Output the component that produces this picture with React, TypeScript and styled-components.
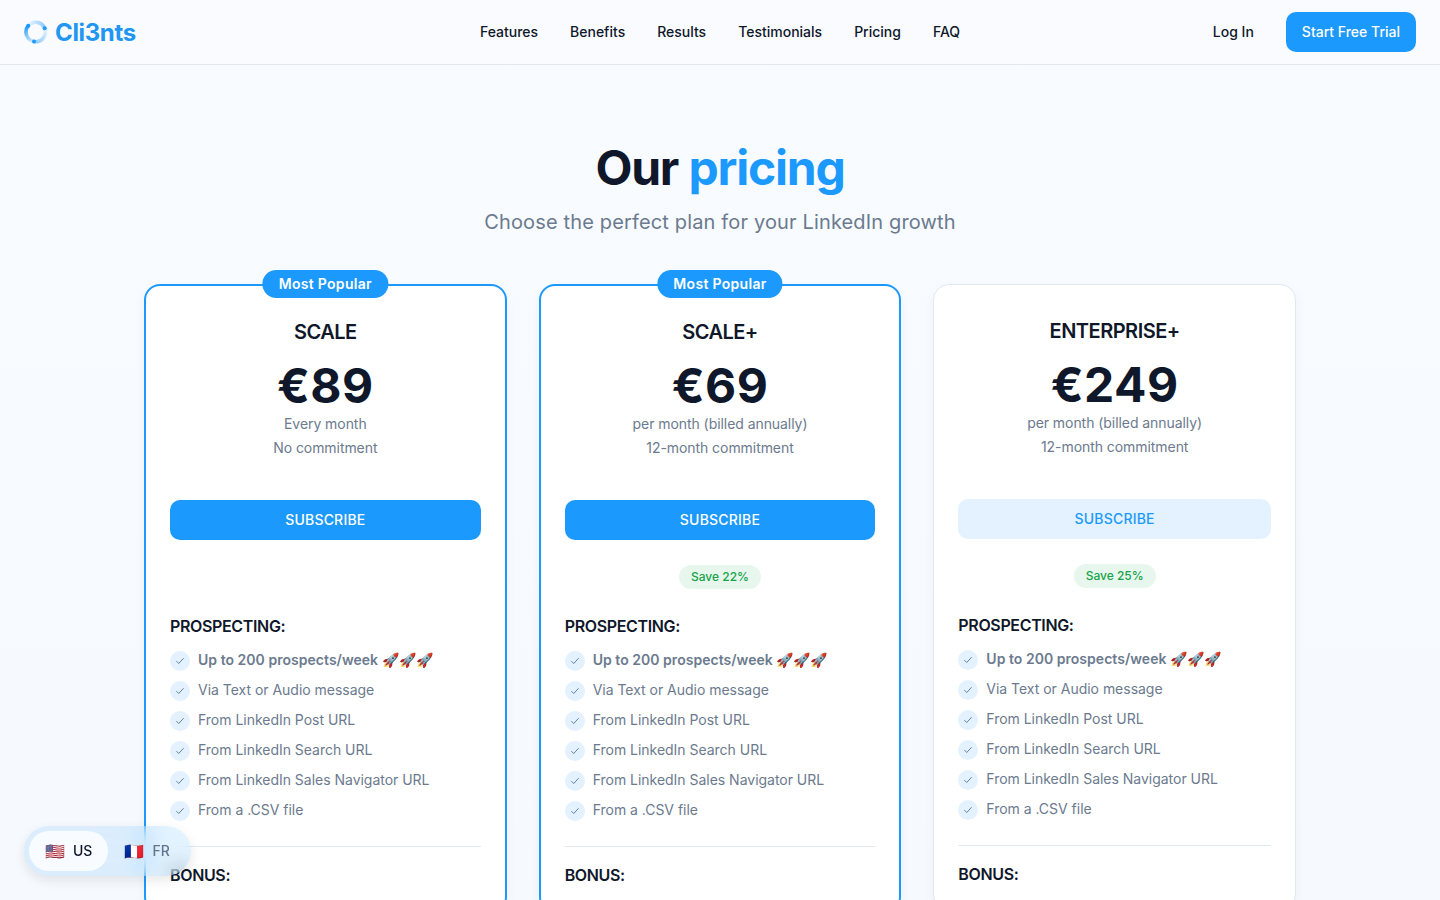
import React from "react";
import styled, { createGlobalStyle } from "styled-components";

const Global = createGlobalStyle`
  * { box-sizing: border-box; }
  html, body { margin: 0; padding: 0; }
  body {
    font-family: Inter, "Noto Sans", sans-serif;
    background: #f8fafd;
    color: #0f172a;
  }
`;

const Page = styled.div`
  min-height: 100vh;
  background: linear-gradient(180deg, #f8fbff 0%, #f6f9fd 100%);
`;
const Nav = styled.header`
  height: 65px;
  display: grid;
  grid-template-columns: 1fr auto 1fr;
  align-items: center;
  padding: 0 24px;
  border-bottom: 1px solid #e2e8f0;
  background: #f9fbfe;
`;
const Brand = styled.div`
  display: flex;
  align-items: center;
  gap: 7px;
  font-size: 24px;
  font-weight: 700;
  letter-spacing: -0.35px;
  color: #2196f3;
`;
const Links = styled.nav`
  display: flex;
  gap: 32px;
`;
const NavLink = styled.a`
  font-size: 14px;
  font-weight: 500;
  line-height: 20px;
  color: #0f172a;
`;
const NavRight = styled.div`
  display: flex;
  justify-content: flex-end;
  align-items: center;
  gap: 32px;
`;
const Trial = styled.button`
  height: 40px;
  padding: 0 16px 2px;
  border: 0;
  border-radius: 10px;
  background: #1c99fd;
  color: #fff;
  font: 500 14px Inter, sans-serif;
`;
const Section = styled.main`
  width: 1152px;
  margin: 0 auto;
  padding-top: 75px;
`;
const Title = styled.h1`
  margin: 0;
  text-align: center;
  font-size: 48px;
  line-height: 56px;
  font-weight: 700;
  letter-spacing: -1.2px;
  color: #0f172a;
`;
const Accent = styled.span`
  color: #1c99fd;
`;
const Sub = styled.p`
  margin: 12px 0 0;
  text-align: center;
  font-size: 20px;
  line-height: 28px;
  letter-spacing: 0.15px;
  color: #6b7a8e;
`;
const Grid = styled.div`
  margin-top: 48px;
  display: grid;
  grid-template-columns: repeat(3, 1fr);
  gap: 32px;
  align-items: start;
`;
const Card = styled.article<{ $featured?: boolean }>`
  position: relative;
  background: #fff;
  border-radius: 16px;
  padding: 24px;
  border: ${(p) => (p.$featured ? "2px solid #1c99fd" : "1px solid #e2e8f0")};
  box-shadow: 0 4px 12px rgba(15, 23, 42, 0.04);
`;
const Popular = styled.div`
  position: absolute;
  top: -16px;
  left: 50%;
  transform: translateX(-50%);
  height: 28px;
  padding: 0 16px;
  border-radius: 14px;
  background: #1c99fd;
  color: #fff;
  font-size: 14px;
  font-weight: 600;
  line-height: 28px;
  letter-spacing: 0.3px;
  white-space: nowrap;
`;
const Head = styled.div`
  text-align: center;
`;
const PlanName = styled.h3`
  margin: 8px 0 0;
  font-size: 20px;
  line-height: 28px;
  font-weight: 600;
  letter-spacing: -0.5px;
  color: #0f172a;
`;
const Price = styled.div`
  margin-top: 13px;
  font-size: 48px;
  line-height: 53px;
  font-weight: 700;
  letter-spacing: 0.5px;
  color: #0f172a;
`;
const Terms = styled.div`
  font-size: 14px;
  line-height: 24px;
  letter-spacing: -0.06px;
  color: #6b7a8e;
  min-height: 48px;
`;
const Subscribe = styled.button<{ $muted?: boolean }>`
  display: block;
  width: 100%;
  height: 40px;
  margin-top: 40px;
  padding: 0 0 2px;
  border: 0;
  border-radius: 10px;
  background: ${(p) => (p.$muted ? "#e3f2fe" : "#1c99fd")};
  color: ${(p) => (p.$muted ? "#1c99fd" : "#fff")};
  font: 500 14px Inter, sans-serif;
  letter-spacing: 0.2px;
`;
const SaveRow = styled.div`
  height: 24px;
  margin-top: 25px;
  display: flex;
  justify-content: center;
`;
const Save = styled.span`
  height: 24px;
  padding: 0 12px;
  border-radius: 12px;
  background: #e8f7ed;
  color: #16a34a;
  font-size: 12px;
  font-weight: 500;
  line-height: 24px;
`;
const Group = styled.h4<{ $tight?: boolean }>`
  margin: ${(p) => (p.$tight ? "16px" : "25px")} 0 0;
  font-size: 16px;
  line-height: 24px;
  font-weight: 600;
  letter-spacing: -0.35px;
  color: #0f172a;
`;
const List = styled.ul`
  list-style: none;
  margin: 12px 0 0;
  padding: 0;
  display: flex;
  flex-direction: column;
  gap: 10px;
`;
const Item = styled.li`
  display: flex;
  align-items: flex-start;
  gap: 8px;
  font-size: 14px;
  line-height: 20px;
  letter-spacing: -0.02px;
  color: #6b7a8e;
`;
const Check = styled.span`
  width: 20px;
  height: 20px;
  margin: 1px 0 -1px;
  flex: none;
  display: flex;
  align-items: center;
  justify-content: center;
  border-radius: 50%;
  background: #e3f2fe;
  color: #4b6b8a;
`;
const Strong = styled.span`
  font-weight: 600;
  letter-spacing: 0.03px;
`;
const Divider = styled.hr`
  margin: 26px 0 0;
  border: 0;
  border-top: 1px solid #e2e8f0;
`;
const Lang = styled.div`
  position: fixed;
  left: 24px;
  bottom: 24px;
  height: 50px;
  padding: 5px;
  display: flex;
  border-radius: 25px;
  background: rgba(28, 153, 253, 0.12);
  backdrop-filter: blur(10px);
  box-shadow: 0 4px 12px rgba(15, 23, 42, 0.1);
`;
const LangOption = styled.div<{ $active?: boolean }>`
  height: 40px;
  padding: 0 16px 1px;
  display: flex;
  align-items: center;
  gap: 8px;
  border-radius: 20px;
  background: ${(p) => (p.$active ? "#f8fbff" : "transparent")};
  color: ${(p) => (p.$active ? "#0f172a" : "#64748b")};
  font-size: 14px;
  font-weight: 500;
`;
const Flag = styled.span`
  font-size: 16px;
  line-height: 20px;
`;

const Logo = () => (
  <svg width="24" height="24" viewBox="0 0 24 24" fill="none">
    <defs>
      <linearGradient id="arcA" gradientUnits="userSpaceOnUse" x1="10" y1="21.5" x2="4.3" y2="5.7">
        <stop offset="0" stopColor="#cfe7fd" />
        <stop offset="0.6" stopColor="#6fbdfb" />
        <stop offset="1" stopColor="#1c99fd" />
      </linearGradient>
      <linearGradient id="arcB" gradientUnits="userSpaceOnUse" x1="4.3" y1="5.7" x2="20.7" y2="8.3">
        <stop offset="0" stopColor="#e6f3fe" />
        <stop offset="1" stopColor="#8ecbfc" />
      </linearGradient>
      <linearGradient id="arcC" gradientUnits="userSpaceOnUse" x1="20.7" y1="8.3" x2="10" y2="21.5">
        <stop offset="0" stopColor="#e6f3fe" />
        <stop offset="1" stopColor="#8ecbfc" />
      </linearGradient>
    </defs>
    <g strokeWidth="3.6">
      <path d="M10 21.5A9.7 9.7 0 0 1 4.3 5.7" stroke="url(#arcA)" />
      <path d="M4.3 5.7A9.7 9.7 0 0 1 20.7 8.3" stroke="url(#arcB)" />
      <path d="M20.7 8.3A9.7 9.7 0 0 1 10 21.5" stroke="url(#arcC)" />
    </g>
    <circle cx="4.3" cy="5.7" r="2" fill="#1c99fd" />
    <circle cx="20.7" cy="8.3" r="2" fill="#1c99fd" />
    <circle cx="10" cy="21.4" r="2" fill="#1c99fd" />
  </svg>
);

const Tick = () => (
  <svg width="10" height="10" viewBox="0 0 24 24" fill="none" stroke="currentColor" strokeWidth="2" strokeLinecap="round" strokeLinejoin="round">
    <path d="M4 13l5 5L20 6" />
  </svg>
);

const features = [
  "Via Text or Audio message",
  "From LinkedIn Post URL",
  "From LinkedIn Search URL",
  "From LinkedIn Sales Navigator URL",
  "From a .CSV file",
];

const plans = [
  { name: "SCALE", price: "€89", lines: ["Every month", "No commitment"], featured: true },
  { name: "SCALE+", price: "€69", lines: ["per month (billed annually)", "12-month commitment"], featured: true, save: "Save 22%" },
  { name: "ENTERPRISE+", price: "€249", lines: ["per month (billed annually)", "12-month commitment"], save: "Save 25%" },
];

export default function App() {
  return (
    <Page>
      <Global />
      <Nav>
        <Brand>
          <Logo />
          Cli3nts
        </Brand>
        <Links>
          {["Features", "Benefits", "Results", "Testimonials", "Pricing", "FAQ"].map((l) => (
            <NavLink key={l}>{l}</NavLink>
          ))}
        </Links>
        <NavRight>
          <NavLink>Log In</NavLink>
          <Trial>Start Free Trial</Trial>
        </NavRight>
      </Nav>
      <Section>
        <Title>
          Our <Accent>pricing</Accent>
        </Title>
        <Sub>Choose the perfect plan for your LinkedIn growth</Sub>
        <Grid>
          {plans.map((p) => (
            <Card key={p.name} $featured={p.featured}>
              {p.featured && <Popular>Most Popular</Popular>}
              <Head>
                <PlanName>{p.name}</PlanName>
                <Price>{p.price}</Price>
                <Terms>
                  {p.lines.map((l) => (
                    <div key={l}>{l}</div>
                  ))}
                </Terms>
              </Head>
              <Subscribe $muted={!p.featured}>SUBSCRIBE</Subscribe>
              <SaveRow>{p.save && <Save>{p.save}</Save>}</SaveRow>
              <Group>PROSPECTING:</Group>
              <List>
                <Item>
                  <Check><Tick /></Check>
                  <Strong>Up to 200 prospects/week 🚀🚀🚀</Strong>
                </Item>
                {features.map((f) => (
                  <Item key={f}>
                    <Check><Tick /></Check>
                    {f}
                  </Item>
                ))}
              </List>
              <Divider />
              <Group $tight>BONUS:</Group>
            </Card>
          ))}
        </Grid>
      </Section>
      <Lang>
        <LangOption $active><Flag>🇺🇸</Flag><span>US</span></LangOption>
        <LangOption><Flag>🇫🇷</Flag><span>FR</span></LangOption>
      </Lang>
    </Page>
  );
}
